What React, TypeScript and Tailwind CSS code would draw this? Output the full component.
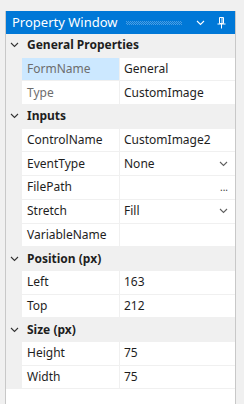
import React from "react";

type Prop = { name: string; value: string; readOnly?: boolean; selected?: boolean; editor?: "dropdown" | "browse" };
type Category = { title: string; props: Prop[] };

const categories: Category[] = [
  {
    title: "General Properties",
    props: [
      { name: "FormName", value: "General", readOnly: true, selected: true },
      { name: "Type", value: "CustomImage", readOnly: true },
    ],
  },
  {
    title: "Inputs",
    props: [
      { name: "ControlName", value: "CustomImage2" },
      { name: "EventType", value: "None", editor: "dropdown" },
      { name: "FilePath", value: "", editor: "browse" },
      { name: "Stretch", value: "Fill", editor: "dropdown" },
      { name: "VariableName", value: "" },
    ],
  },
  {
    title: "Position (px)",
    props: [
      { name: "Left", value: "163" },
      { name: "Top", value: "212" },
    ],
  },
  {
    title: "Size (px)",
    props: [
      { name: "Height", value: "75" },
      { name: "Width", value: "75" },
    ],
  },
];

function Chevron({ className }: { className?: string }) {
  return (
    <svg width="9" height="6" viewBox="0 0 9 6" className={className}>
      <path d="M1 1l3.5 3.5L8 1" fill="none" stroke="currentColor" strokeWidth="1.1" />
    </svg>
  );
}

function PinIcon() {
  return (
    <svg width="9" height="12" viewBox="0 0 9 12" className="text-white">
      <path d="M2.5 0.5h4v6h-4z" fill="none" stroke="currentColor" strokeWidth="1" />
      <path d="M5 1v5" stroke="currentColor" strokeWidth="1" />
      <path d="M0.5 7h8" stroke="currentColor" strokeWidth="1" />
      <path d="M4.5 7v4.5" stroke="currentColor" strokeWidth="1" />
    </svg>
  );
}

// dotted grip strip in the title bar
function Dots() {
  return (
    <svg className="h-[4px] flex-1" height="4">
      <defs>
        <pattern id="dots" width="2" height="2" patternUnits="userSpaceOnUse">
          <rect x="0" y="0" width="1" height="1" fill="#4c9ee2" />
          <rect x="1" y="1" width="1" height="1" fill="#4c9ee2" />
        </pattern>
      </defs>
      <rect width="100%" height="4" fill="url(#dots)" />
    </svg>
  );
}

function Row({ p }: { p: Prop }) {
  return (
    <div className="flex h-[23.7px] border-b border-[#f0f0f0]">
      <div className="w-[16px] shrink-0 bg-[#f0f0f0]" />
      <div
        className={`flex w-[98px] shrink-0 items-center border-r border-[#f0f0f0] pl-[5px] ${
          p.selected ? "bg-[#cce8ff]" : "bg-white"
        } ${p.readOnly ? "text-[#6d6d6d]" : "text-[#1e1e1e]"}`}
      >
        {p.name}
      </div>
      <div className="flex flex-1 items-center justify-between bg-white pl-[4px] pr-[7px] text-[#1e1e1e]">
        <span>{p.value}</span>
        {p.editor === "dropdown" && <Chevron className="text-[#606060]" />}
        {p.editor === "browse" && <span className="text-[10px] leading-none text-[#404040]">...</span>}
      </div>
    </div>
  );
}

export default function App() {
  return (
    <div
      className="h-[404px] w-[244px] bg-[#f0f0f0] pl-[5px] pr-[8px] pt-[11px] text-[12px]"
      style={{ fontFamily: '"Noto Sans", "Open Sans", sans-serif' }}
    >
      <div className="flex h-[393px] flex-col border-x border-[#c8c8c8] bg-white">
        <div className="flex h-[23px] shrink-0 items-center gap-[8px] bg-[#0078d7] pl-[6px] pr-[9px] text-[13px] text-white">
          <span>Property Window</span>
          <Dots />
          <Chevron className="ml-[6px] text-white" />
          <div className="ml-[4px]">
            <PinIcon />
          </div>
        </div>
        <div className="flex flex-col">
          {categories.map((c) => (
            <div key={c.title}>
              <div className="flex h-[23.7px] items-center border-b border-[#f0f0f0] bg-[#f0f0f0]">
                <div className="flex w-[16px] justify-center pl-[1px] text-[#333]">
                  <Chevron />
                </div>
                <span className="pl-[5px] font-bold text-[#1e1e1e]">{c.title}</span>
              </div>
              {c.props.map((p) => (
                <Row key={p.name} p={p} />
              ))}
            </div>
          ))}
        </div>
      </div>
    </div>
  );
}
